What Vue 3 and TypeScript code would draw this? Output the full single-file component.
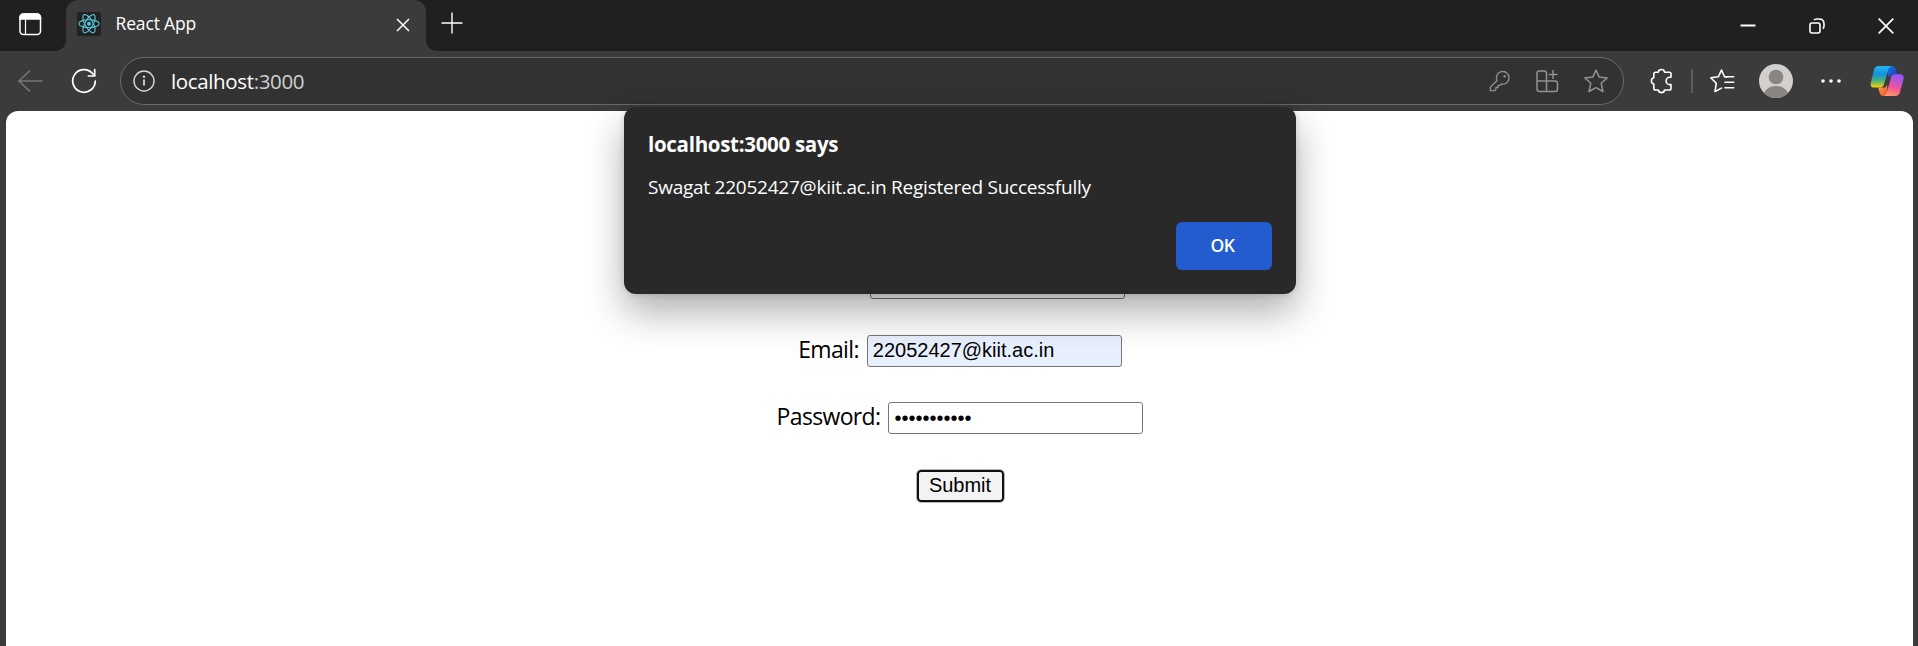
<script setup lang="ts">
import { ref } from 'vue'

const name = ref('Swagat')
const email = ref('22052427@kiit.ac.in')
const password = ref('swagat12345')
</script>

<template>
  <div class="browser">
    <div class="tabbar">
      <svg class="workspace" width="24" height="24" viewBox="0 0 24 24" fill="none" stroke="#fff" stroke-width="1.5">
        <rect x="2" y="2" width="20.5" height="20.5" rx="3.5" />
        <path d="M2 5.5A3.5 3.5 0 0 1 5.5 2H19a3.5 3.5 0 0 1 3.500 3.500V7H2z" fill="#fff" />
        <path d="M7.500 7v15.500" stroke-width="1.200" />
      </svg>
      <div class="tab">
        <svg class="favicon" width="24" height="24" viewBox="0 0 24 24" fill="none" stroke="#58c4dc" stroke-width="1.150">
          <rect width="24" height="24" rx="2.500" fill="#222" stroke="none" />
          <ellipse cx="12" cy="11.700" rx="10.200" ry="4" />
          <ellipse cx="12" cy="11.700" rx="10.200" ry="4" transform="rotate(60 12 11.700)" />
          <ellipse cx="12" cy="11.700" rx="10.200" ry="4" transform="rotate(120 12 11.700)" />
          <circle cx="12" cy="11.700" r="2" fill="#58c4dc" stroke="none" />
        </svg>
        <span class="tab-title">React App</span>
        <svg class="tab-close" width="14" height="14" viewBox="0 0 14 14" stroke="#fff" stroke-width="1.500">
          <path d="M1 1l12 12M13 1L1 13" />
        </svg>
      </div>
      <svg class="new-tab" width="22" height="22" viewBox="0 0 22 22" stroke="#fff" stroke-width="1.400">
        <path d="M.5 11h21M11 .5v21" />
      </svg>
      <div class="window-controls">
        <svg width="16" height="16" viewBox="0 0 16 16"><path d="M.5 7.500h15" stroke="#fff" stroke-width="2" /></svg>
        <svg width="16" height="16" viewBox="0 0 16 16" fill="none" stroke="#fff" stroke-width="1.600">
          <rect x="1" y="5" width="10" height="10" rx="2" />
          <path d="M5 2.200Q5.600 1 7.500 1H10q5 0 5 5v2q0 2-1.200 2.700" />
        </svg>
        <svg width="16" height="16" viewBox="0 0 16 16"><path d="M.7.7l14.600 14.600M15.300.7L.7 15.300" stroke="#fff" stroke-width="1.700" /></svg>
      </div>
    </div>

    <div class="toolbar">
      <svg class="back" width="26" height="24" viewBox="0 0 26 24" fill="none" stroke="#777" stroke-width="1.500">
        <path d="M13 1.500L2 12l11 10.500M2 12h23.500" />
      </svg>
      <svg class="reload" width="26" height="26" viewBox="0 0 26 26" fill="none" stroke="#fff" stroke-width="1.700" stroke-linecap="round" stroke-linejoin="round">
        <path d="M24.300 13A11.300 11.300 0 1 1 21.500 5.500l2 2" />
        <path d="M23.700 1.700v6.300h-6.300" />
      </svg>
      <div class="address">
        <svg class="info" width="22" height="22" viewBox="0 0 22 22" fill="none" stroke="#d8d8d8" stroke-width="1.400">
          <circle cx="11" cy="11" r="10" />
          <path d="M11 9.500v6" stroke-width="1.800" />
          <circle cx="11" cy="6.700" r="1.200" fill="#d8d8d8" stroke="none" />
        </svg>
        <span class="url">localhost<span class="port">:3000</span></span>
        <div class="address-actions">
          <svg width="22" height="22" viewBox="0 0 22 22" fill="none" stroke="#929292" stroke-width="1.300" stroke-linejoin="round">
            <path d="M8 10.500A6.300 6.300 0 1 1 12.500 14L11 15.300H9v2.200H6.800v2.200l-1 1H2q-.7 0-.7-.7v-2.800z" />
            <circle cx="15.700" cy="6.200" r="1.200" fill="#929292" stroke="none" />
          </svg>
          <svg width="24" height="24" viewBox="0 0 24 24" fill="none" stroke="#929292" stroke-width="1.500">
            <path d="M11.500 22.500h-7A2.500 2.500 0 0 1 2 20V4.500A2.500 2.500 0 0 1 4.500 2h4.500a2.500 2.500 0 0 1 2.500 2.500zM2 12h18A2.500 2.500 0 0 1 22.500 14.500V20a2.500 2.500 0 0 1-2.500 2.500h-8.500M18 1v9M13.700 5.500h8.800" />
          </svg>
          <svg width="26" height="26" viewBox="0 0 26 26" fill="none" stroke="#929292" stroke-width="1.500" stroke-linejoin="round">
            <path d="M13 2l3.200 7.100 8 .9-6 5.300 1.800 8.200L13 19.700 6 23.500l1.800-8.200-6-5.300 8-.9z" />
          </svg>
        </div>
      </div>
      <svg class="extensions" width="24" height="26" viewBox="0 0 24 26" fill="none" stroke="#fff" stroke-width="1.600" stroke-linejoin="round">
        <path d="M9.300 4.200a3.200 3.200 0 0 1 6.300 0h4.600q1.800 0 1.800 1.800v3.200h-1.200a3.700 3.700 0 0 0 0 7.400H22v3.600q0 1.800-1.800 1.800h-4.600a3.200 3.200 0 0 1-6.300 0H6.600q-1.800 0-1.800-1.800v-4.200a3.200 3.200 0 0 1 0-6.200V6q0-1.800 1.800-1.800z" />
      </svg>
      <div class="divider"></div>
      <svg class="favorites" width="26" height="26" viewBox="0 0 26 26" fill="none" stroke="#fff" stroke-width="1.600" stroke-linejoin="round" stroke-linecap="round">
        <path d="M17.500 9.300l-2-.5L12.500 2 9.300 8.800l-7.500 1 5.500 5.400L6 23.500l6.500-3.400M16 8.700h8.700M16 14.200h8.700M16 19.800h8.700" />
      </svg>
      <svg class="avatar" width="34" height="34" viewBox="0 0 34 34">
        <defs><clipPath id="avatar-clip"><circle cx="17" cy="17" r="17" /></clipPath></defs>
        <circle cx="17" cy="17" r="17" fill="#d2d0ce" />
        <g clip-path="url(#avatar-clip)" fill="#8a8583">
          <circle cx="17" cy="13" r="7.300" />
          <ellipse cx="17" cy="33" rx="13" ry="11" />
        </g>
      </svg>
      <svg class="more" width="20" height="6" viewBox="0 0 20 6" fill="#fff">
        <circle cx="2" cy="3" r="1.800" /><circle cx="10" cy="3" r="1.800" /><circle cx="18" cy="3" r="1.800" />
      </svg>
      <svg class="copilot" width="34" height="32" viewBox="0 0 34 32">
        <defs>
          <linearGradient id="cp-left" x1="0" y1="0" x2="0" y2="1">
            <stop offset="0" stop-color="#25b5f4" /><stop offset=".4" stop-color="#1590dc" /><stop offset=".7" stop-color="#50b670" /><stop offset="1" stop-color="#ffd000" />
          </linearGradient>
          <linearGradient id="cp-right" x1=".3" y1="0" x2="0" y2="1">
            <stop offset="0" stop-color="#9a55f0" /><stop offset=".5" stop-color="#f0549a" /><stop offset="1" stop-color="#ffa657" />
          </linearGradient>
          <linearGradient id="cp-top" x1="0" y1="0" x2="1" y2="1">
            <stop offset="0" stop-color="#187be5" /><stop offset="1" stop-color="#173bbd" />
          </linearGradient>
          <linearGradient id="cp-bottom" x1="0" y1="0" x2="1" y2="1">
            <stop offset="0" stop-color="#ffad3b" /><stop offset="1" stop-color="#e94842" />
          </linearGradient>
        </defs>
        <path d="M16 1h5.500c2.500 0 3.600 1.200 4.300 3.500l1.500 4.900h-4c-2.500 0-3.700 1.500-4.300 3.600z" fill="url(#cp-top)" />
        <path d="M8 22.500h7.500l1.500-3 1 11.500h-4.500c-2.300 0-3.300-1.300-3.900-3.300C9 25 8.700 23.800 8 22.500z" fill="url(#cp-bottom)" />
        <path d="M8.800 1h13c-2 .4-3 2-3.500 3.600L14 19.200c-.7 2.200-1.800 3.400-4.200 3.400H4C1.200 22.600.2 20.500.8 17.800L4 5C4.700 2.300 6.200 1 8.800 1z" fill="url(#cp-left)" />
        <path d="M24.500 9.300H30c3 0 4.200 2.200 3.500 5l-3.400 12.400c-.8 2.900-2.300 4.300-5 4.300H13.500c1.900-.5 2.800-2 3.300-3.700l4.200-14.500c.6-2.100 1.500-3.500 3.500-3.500z" fill="url(#cp-right)" />
      </svg>
    </div>

    <main class="page">
      <form class="form" @submit.prevent>
        <label class="row"><span class="label">Name:</span><input v-model="name" type="text" /></label>
        <label class="row"><span class="label">Email:</span><input v-model="email" class="autofilled" type="text" /></label>
        <label class="row"><span class="label">Password:</span><input v-model="password" type="password" /></label>
        <button class="submit" type="submit">Submit</button>
      </form>
    </main>

    <div class="dialog" role="alertdialog">
      <div class="dialog-title">localhost:3000 says</div>
      <div class="dialog-message">Swagat 22052427@kiit.ac.in Registered Successfully</div>
      <button class="ok" type="button">OK</button>
    </div>
  </div>
</template>

<style>
html, body { margin: 0; overflow: hidden; background: #3b3b3b; }
</style>

<style scoped>
* { box-sizing: border-box; }
svg { display: block; flex: none; }
.browser {
  position: relative;
  height: 646px;
  overflow: hidden;
  background: #3b3b3b;
  color: #fff;
  font-family: "Open Sans", "Noto Sans", sans-serif;
}
.tabbar { display: flex; height: 51px; background: #202020; }
.workspace { margin: 12px 0 0 18px; }
.tab {
  position: relative;
  display: flex;
  width: 360px;
  height: 51px;
  margin-left: 24px;
  padding-left: 11px;
  border-radius: 12px 12px 0 0;
  background: #3b3b3b;
}
.tab::before, .tab::after {
  content: "";
  position: absolute;
  bottom: 0;
  width: 10px;
  height: 10px;
}
.tab::before { left: -10px; background: radial-gradient(circle at 0 0, transparent 9.500px, #3b3b3b 10px); }
.tab::after { right: -10px; background: radial-gradient(circle at 100% 0, transparent 9.500px, #3b3b3b 10px); }
.favicon { margin-top: 12px; }
.tab-title { margin: 11px 0 0 14.500px; font-size: 17.500px; line-height: 24px; letter-spacing: -.15px; white-space: nowrap; }
.tab-close { margin: 18px 16px 0 auto; }
.new-tab { margin: 12px 0 0 15px; }
.window-controls { display: flex; gap: 53px; margin: 17.500px 24.500px 0 auto; }
.toolbar { display: flex; align-items: center; height: 60px; padding-left: 17px; }
.reload { margin-left: 28px; }
.address {
  display: flex;
  align-items: center;
  width: 1504px;
  height: 48px;
  margin-left: 23px;
  padding: 0 14px 0 12px;
  border: 1.500px solid #696969;
  border-radius: 24px;
  background: #323232;
}
.url { margin-left: 16px; font-size: 20.500px; line-height: 28px; letter-spacing: -.36px; white-space: nowrap; }
.port { color: #d0d0d0; }
.address-actions { display: flex; align-items: center; gap: 24px; margin-left: auto; }
.extensions { margin-left: 25px; }
.divider { width: 1.500px; height: 24px; margin-left: 18px; background: #5c5c5c; }
.favorites { margin-left: 16px; }
.avatar { margin-left: 24px; }
.more { margin-left: 28px; }
.copilot { margin-left: 29px; }
.page { height: 535px; margin: 0 5px 0 6px; padding: 156px 0 0 1px; border-radius: 12px 12px 0 0; background: #fff; color: #000; }
.form { display: flex; flex-direction: column; align-items: center; gap: 35.500px; }
.row { display: flex; align-items: center; gap: 8px; height: 32px; }
.label { padding-bottom: 4px; font-size: 23px; line-height: 28px; letter-spacing: -.65px; white-space: nowrap; }
input {
  width: 255px;
  height: 32px;
  margin: 0;
  padding: 0 5px;
  border: 1px solid #767676;
  border-radius: 3px;
  outline: none;
  background: #fff;
  color: #000;
  font: 20px "Liberation Sans", Arial, sans-serif;
}
.autofilled { background: #e8f0fe; }
.submit {
  width: 87px;
  height: 32px;
  padding: 0 0 1px;
  border: 2px solid #101010;
  border-radius: 4px;
  outline: 1px solid #b5b5b5;
  outline-offset: -.5px;
  background: #f3f3f3;
  color: #000;
  font: 20px "Liberation Sans", Arial, sans-serif;
}
.dialog {
  position: absolute;
  left: 624px;
  top: 107px;
  display: flex;
  flex-direction: column;
  width: 672px;
  height: 187px;
  padding: 22px 24px 0;
  border-radius: 12px;
  background: #292929;
  box-shadow: 0 18px 38px rgba(0, 0, 0, .32), 0 0 6px rgba(0, 0, 0, .15);
}
.dialog-title { height: 30px; font-size: 20.500px; font-weight: 700; line-height: 30px; letter-spacing: -.3px; white-space: nowrap; }
.dialog-message { height: 30px; margin-top: 13px; font-size: 19px; line-height: 30px; letter-spacing: -.24px; white-space: nowrap; }
.ok {
  width: 96px;
  height: 48px;
  margin: 20px 0 0 auto;
  padding: 0 3px 2px 0;
  border: 0;
  border-radius: 6px;
  background: #235ccf;
  color: #fff;
  font: 600 17.500px "Open Sans", sans-serif;
  letter-spacing: -.5px;
}
</style>
